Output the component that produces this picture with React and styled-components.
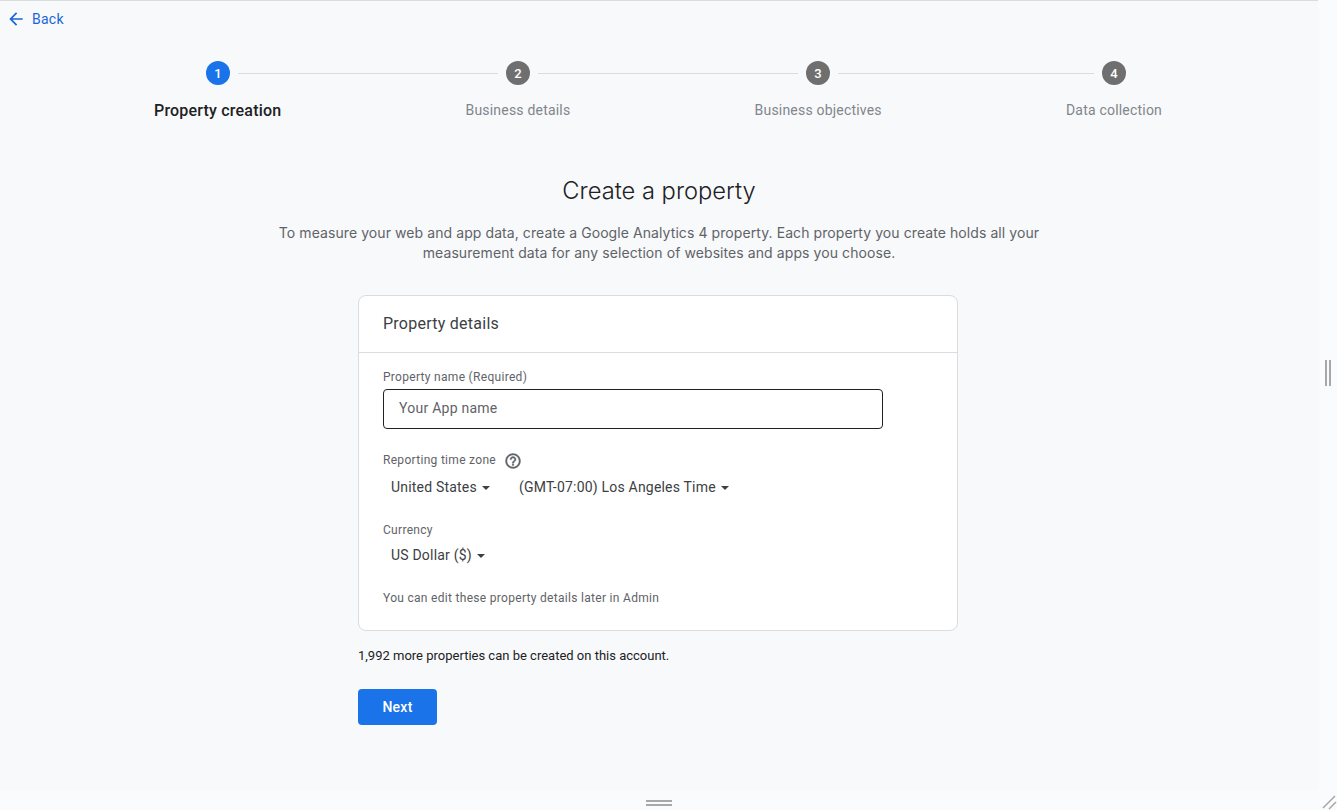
import React from "react";
import styled, { createGlobalStyle } from "styled-components";

const Global = createGlobalStyle`
  html, body { margin: 0; padding: 0; height: 100%; background: #fafbfd; }
  #root { height: 100%; }
  * { box-sizing: border-box; }
`;

const Shell = styled.div`
  width: 1337px;
  height: 810px;
  display: grid;
  grid-template-columns: 1318px 19px;
  grid-template-rows: 790px 20px;
  font-family: Roboto, "Liberation Sans", sans-serif;
  overflow: hidden;
  background: #fafbfd;
`;

const Main = styled.main`
  background: #f8f9fb;
  border-top: 1px solid #dadce0;
  display: flex;
  flex-direction: column;
`;

const SideRail = styled.div`
  display: flex;
  align-items: flex-start;
  justify-content: center;
  padding-top: 360px;
  gap: 2px;
`;

const VBar = styled.span`
  width: 2px;
  height: 26px;
  background: #a8a8a8;
`;

const BottomRail = styled.div`
  display: flex;
  flex-direction: column;
  align-items: center;
  padding-top: 10px;
  gap: 2px;
`;

const HBar = styled.span`
  width: 26px;
  height: 2px;
  background: #a8a8a8;
`;

const Corner = styled.div`
  display: flex;
  align-items: flex-end;
  justify-content: flex-end;
`;

const BackLink = styled.a`
  display: flex;
  align-items: center;
  gap: 6px;
  height: 36px;
  padding-left: 6px;
  color: #1a66d8;
  font-size: 14px;
  letter-spacing: 0.25px;
`;

const Stepper = styled.div`
  width: 1008px;
  margin-left: 154px;
  padding-top: 24px;
`;

const Track = styled.div`
  display: flex;
  align-items: center;
  padding-left: 52px;
`;

const Circle = styled.div`
  flex: none;
  width: 24px;
  height: 24px;
  border-radius: 50%;
  display: flex;
  align-items: center;
  justify-content: center;
  font-size: 13px;
  font-weight: 500;
  color: #fff;
  background: ${(p) => (p.$active ? "#1a73e8" : "#6f6f6f")};
`;

const Line = styled.div`
  flex: none;
  width: ${(p) => p.$width}px;
  height: 1px;
  margin: 0 8px;
  background: #dadce0;
`;

const Labels = styled.div`
  display: flex;
  justify-content: space-between;
  margin-top: 15px;
`;

const StepLabel = styled.div`
  font-size: ${(p) => (p.$active ? "16px" : "14px")};
  font-weight: ${(p) => (p.$active ? 500 : 400)};
  line-height: 20px;
  padding-top: ${(p) => (p.$active ? "1px" : "0")};
  letter-spacing: 0.2px;
  color: ${(p) => (p.$active ? "#202124" : "#80868b")};
`;

const Title = styled.h1`
  margin: 54px 0 0;
  text-align: center;
  font-family: Inter, "Open Sans", sans-serif;
  font-weight: 300;
  font-size: 23.7px;
  line-height: 32px;
  color: #202124;
`;

const Intro = styled.p`
  margin: 16px 0 0;
  text-align: center;
  font-family: Inter, "Open Sans", sans-serif;
  font-size: 14px;
  letter-spacing: 0.08px;
  line-height: 20px;
  color: #5f6368;
`;

const Column = styled.div`
  width: 600px;
  margin: 32px 0 0 358px;
`;

const Card = styled.section`
  background: #fff;
  border: 1px solid #dadce0;
  border-radius: 8px;
  height: 336px;
`;

const CardHead = styled.div`
  height: 57px;
  padding: 0 24px 2px;
  display: flex;
  align-items: center;
  border-bottom: 1px solid #dadce0;
  font-size: 16px;
  letter-spacing: 0.25px;
  color: #3c4043;
`;

const CardBody = styled.div`
  padding: 16px 24px 0;
`;

const FieldLabel = styled.div`
  font-size: 12px;
  line-height: 16px;
  letter-spacing: 0.3px;
  color: #5f6368;
  display: flex;
  align-items: flex-start;
  gap: 8px;
`;

const NameInput = styled.div`
  width: 500px;
  height: 40px;
  margin: 4px 0 23px;
  padding: 0 15px 2px;
  display: flex;
  align-items: center;
  border: 1px solid #202124;
  border-radius: 4px;
  font-size: 14px;
  letter-spacing: 0.25px;
  color: #5f6368;
`;

const Selects = styled.div`
  display: flex;
  gap: 29px;
  margin: ${(p) => p.$top}px 0 21px;
  height: 28px;
  align-items: center;
`;

const Select = styled.div`
  display: flex;
  align-items: center;
  gap: 5px;
  padding-left: ${(p) => p.$inset}px;
  font-size: 14px;
  letter-spacing: 0.2px;
  color: #3c4043;
`;

const Caret = styled.span`
  width: 0;
  height: 0;
  margin-top: 2px;
  border-left: 4.5px solid transparent;
  border-right: 4.5px solid transparent;
  border-top: 4.5px solid #3c4043;
`;

const Hint = styled.div`
  margin-top: 14px;
  font-size: 12px;
  line-height: 16px;
  letter-spacing: 0.3px;
  color: #5f6368;
`;

const Remaining = styled.div`
  margin-top: 17px;
  font-size: 13px;
  line-height: 16px;
  color: #202124;
`;

const NextButton = styled.button`
  display: block;
  margin-top: 25px;
  width: 79px;
  height: 36px;
  border: 0;
  border-radius: 4px;
  background: #1a73e8;
  color: #fff;
  font: 500 14px Roboto, sans-serif;
  letter-spacing: 0.25px;
`;

const HelpSvg = styled.svg`
  flex: none;
  margin: 0 0 -2px;
`;

const ArrowBack = () => (
  <svg width="20" height="20" viewBox="0 0 24 24" fill="#1a66d8">
    <path d="M20 11H7.83l5.59-5.59L12 4l-8 8 8 8 1.41-1.41L7.83 13H20v-2z" />
  </svg>
);

const HelpIcon = () => (
  <HelpSvg width="18" height="18" viewBox="0 0 24 24" fill="#5f6368" stroke="#5f6368" strokeWidth="0.5">
    <path d="M11 18h2v-2h-2v2zm1-16C6.48 2 2 6.48 2 12s4.48 10 10 10 10-4.48 10-10S17.52 2 12 2zm0 18c-4.41 0-8-3.59-8-8s3.59-8 8-8 8 3.59 8 8-3.59 8-8 8zm0-14c-2.21 0-4 1.79-4 4h2c0-1.1.9-2 2-2s2 .9 2 2c0 2-3 1.75-3 5h2c0-2.25 3-2.5 3-5 0-2.21-1.79-4-4-4z" />
  </HelpSvg>
);

const CornerGrip = () => (
  <svg width="16" height="16" viewBox="0 0 16 16" stroke="#a8a8a8" strokeWidth="1.5">
    <path d="M2 14L14 2M8 15L15 8" />
  </svg>
);

const steps = ["Property creation", "Business details", "Business objectives", "Data collection"];
const lineWidths = [260, 260, 256];

export default function App() {
  return (
    <Shell>
      <Global />
      <Main>
        <BackLink>
          <ArrowBack />
          Back
        </BackLink>
        <Stepper>
          <Track>
            {steps.map((s, i) => (
              <React.Fragment key={s}>
                <Circle $active={i === 0}>{i + 1}</Circle>
                {i < steps.length - 1 && <Line $width={lineWidths[i]} />}
              </React.Fragment>
            ))}
          </Track>
          <Labels>
            {steps.map((s, i) => (
              <StepLabel key={s} $active={i === 0}>{s}</StepLabel>
            ))}
          </Labels>
        </Stepper>
        <Title>Create a property</Title>
        <Intro>
          To measure your web and app data, create a Google Analytics 4 property. Each property you create holds all your
          <br />
          measurement data for any selection of websites and apps you choose.
        </Intro>
        <Column>
          <Card>
            <CardHead>Property details</CardHead>
            <CardBody>
              <FieldLabel>Property name (Required)</FieldLabel>
              <NameInput>Your App name</NameInput>
              <FieldLabel>
                Reporting time zone <HelpIcon />
              </FieldLabel>
              <Selects $top={5}>
                <Select $inset={8}>United States <Caret /></Select>
                <Select $inset={0}>(GMT-07:00) Los Angeles Time <Caret /></Select>
              </Selects>
              <FieldLabel>Currency</FieldLabel>
              <Selects $top={3}>
                <Select $inset={8}>US Dollar ($) <Caret /></Select>
              </Selects>
              <Hint>You can edit these property details later in Admin</Hint>
            </CardBody>
          </Card>
          <Remaining>1,992 more properties can be created on this account.</Remaining>
          <NextButton>Next</NextButton>
        </Column>
      </Main>
      <SideRail>
        <VBar />
        <VBar />
      </SideRail>
      <BottomRail>
        <HBar />
        <HBar />
      </BottomRail>
      <Corner>
        <CornerGrip />
      </Corner>
    </Shell>
  );
}
